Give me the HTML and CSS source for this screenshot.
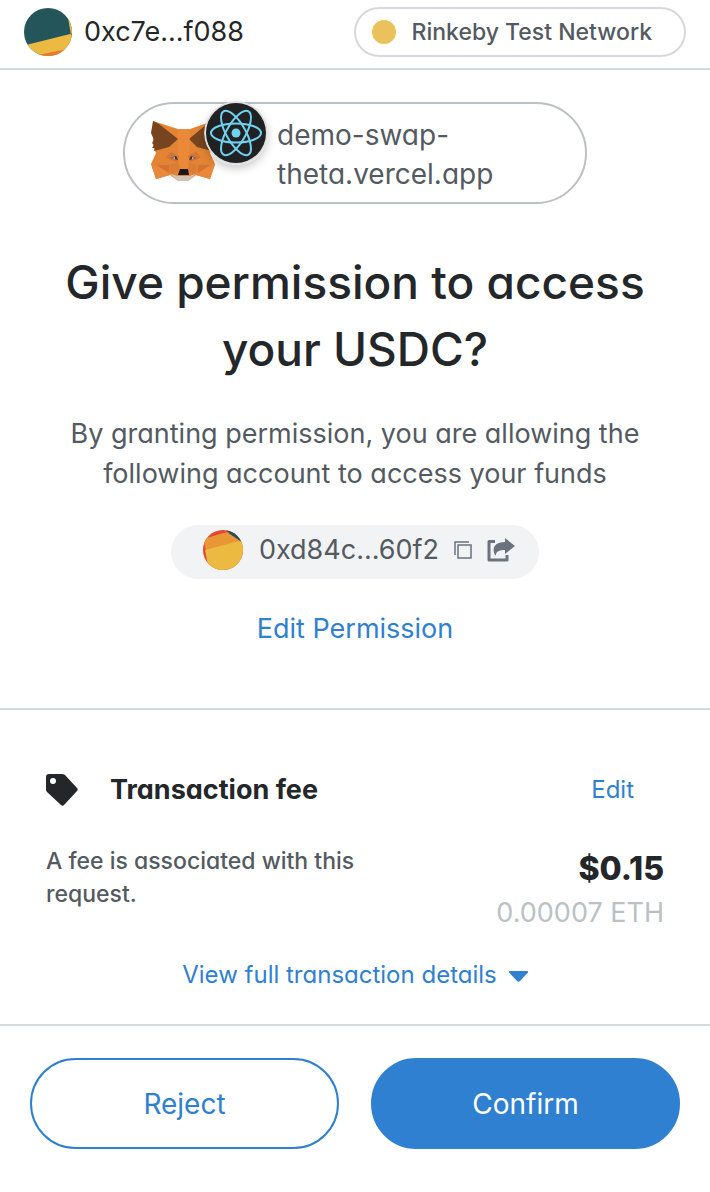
FILE: index.html
```html
<!DOCTYPE html>
<html lang="en">
<head>
<meta charset="utf-8">
<meta name="viewport" content="width=device-width, initial-scale=1">
<title>Give permission</title>
<link rel="stylesheet" href="styles.css">
</head>
<body>
<header class="topbar">
  <div class="account">
    <svg class="avatar" viewBox="0 0 48 48" aria-hidden="true">
      <clipPath id="a"><circle cx="24" cy="24" r="24"/></clipPath>
      <g clip-path="url(#a)"><path fill="#24555a" d="M0 0h48v48H0z"/><path fill="#ecb941" d="M0 37.500 48 25.500V48H0zM44 10l3 17h2V7z"/><path fill="#e7772d" d="M14 47 44 41v7H14z"/></g>
    </svg>
    <span>0xc7e...f088</span>
  </div>
  <div class="network"><span class="network-dot"></span>Rinkeby Test Network</div>
</header>
<main>
  <section class="permission">
    <div class="origin">
      <div class="origin-icons">
        <svg class="fox" viewBox="0 0 64 62" aria-hidden="true">
          <path fill="#e38434" d="M2 0 27 8H39L62 0V27L59 32 64 43 59 58 45 54 37 60H27L19 54 5 58 0 43 5 32 2 26z"/>
          <path fill="#76451f" d="M2 0 8 3 27 18 18 26 3 30 4 27 1 27 3 24 1 22 3 19 0 12zM62 0 56 3 38 18 46 26 61 30 60 27 63 27 61 24 63 22 61 19 64 12z"/>
          <path fill="#ea8a38" d="M27 8H39L38 34 37 50H29L27 34z"/>
          <path fill="#d5722f" d="M5 44H18V52zM60 44H47V52z"/>
          <path fill="#e9873a" d="M0 43 5 44 18 52 19 54 5 58zM64 43 60 44 47 52 45 54 59 58z"/>
          <path fill="#d27337" d="M15 36 20 31 28 35 26 41 18 38zM50 36 45 31 37 35 39 41 47 38z"/>
          <path fill="#dc7d33" d="M18 44 27 41 29 50 20 53zM46 44 38 41 37 50 44 53z"/>
          <path fill="#33363c" d="M20 37 25 35 27 39zM45 37 40 35 38 39z"/>
          <path fill="#c7c5ca" d="m21 37 3-1v2zM44 37l-3-1v2z"/>
          <path fill="#d2c3b5" d="m19 53 8 2h11l7-2-8 7H27z"/>
          <path fill="#181a1e" d="M29 48h8l1 6H27z"/>
        </svg>
        <svg class="react" viewBox="0 0 64 64" aria-hidden="true">
          <circle cx="32" cy="32" r="32" fill="#dedfe1"/><circle cx="32" cy="32" r="30" fill="#202122"/>
          <g fill="none" stroke="#70d2f0" stroke-width="2"><ellipse cx="32" cy="32" rx="25" ry="9.500"/><ellipse cx="32" cy="32" rx="25" ry="9.500" transform="rotate(60 32 32)"/><ellipse cx="32" cy="32" rx="25" ry="9.500" transform="rotate(120 32 32)"/></g>
          <circle cx="32" cy="32" r="4.500" fill="#70d2f0"/>
        </svg>
      </div>
      <span class="origin-name">demo-swap-<br>theta.vercel.app</span>
    </div>
    <h1>Give permission to access your USDC?</h1>
    <p class="intro">By granting permission, you are allowing the following account to access your funds</p>
    <div class="contract">
      <svg class="contract-avatar" viewBox="0 0 40 40" aria-hidden="true">
        <clipPath id="b"><circle cx="20" cy="20" r="20"/></clipPath>
        <g clip-path="url(#b)"><path fill="#e4472d" d="M0 0h40v40H0z"/><path fill="#e89636" d="m0 9 24-7 16 10v10L3 20z"/><path fill="#ecb941" d="m2 20 38-10v30H6z"/><path fill="#24505a" d="M23 0h17v13L27 4z"/></g>
      </svg>
      <span class="contract-address">0xd84c...60f2</span>
      <button class="icon-button copy" aria-label="Copy address"><svg viewBox="0 0 18 18"><path fill="none" stroke="#6a737d" stroke-width="1.500" d="M1 14V1h14M4 4h13v13H4z"/></svg></button>
      <button class="icon-button share" aria-label="Open in explorer"><svg viewBox="0 0 28 24"><path fill="none" stroke="#6a737d" stroke-width="3" stroke-linejoin="round" d="M8 3.500H2V22H20V17"/><path fill="#6a737d" d="M18 0v4C9 4 4 9 8 17q1 1 1-1c1-3 4-4 9-4v4l10-8z"/></svg></button>
    </div>
    <button class="link">Edit Permission</button>
  </section>
  <section class="fee">
    <div class="fee-head">
      <svg class="tag" viewBox="0 0 32 32" aria-hidden="true"><path fill="#24272a" fill-rule="evenodd" d="M3 0h13c1 0 2 .4 3 1l12 13c1 1 1 2 0 3L18 31c-1 1-2 1-3 0L1 18c-1-1-1-2-1-3V3c0-2 1-3 3-3m4 4a3 3 0 1 0 0 6 3 3 0 0 0 0-6"/></svg>
      <h2>Transaction fee</h2>
      <button class="link fee-edit">Edit</button>
    </div>
    <div class="fee-body">
      <p class="fee-note">A fee is associated with this request.</p>
      <div class="fee-amount"><strong>$0.15</strong><span>0.00007 ETH</span></div>
    </div>
    <button class="link details">View full transaction details<svg viewBox="0 0 19 11" aria-hidden="true"><path fill="#2f80d1" d="M1 0h17q2 0 .5 2L11 10q-1.500 1.500-3 0L.5 2Q-1 0 1 0"/></svg></button>
  </section>
</main>
<footer class="actions">
  <button class="action reject">Reject</button>
  <button class="action confirm">Confirm</button>
</footer>
</body>
</html>
```
FILE: styles.css
```css
* { box-sizing: border-box; }
body {
  margin: 0;
  background: #fff;
  color: #24272a;
  font: 27px/40px Inter, "Liberation Sans", sans-serif;
  font-feature-settings: "cv11";
}
h1, h2, p { margin: 0; }
button {
  padding: 0;
  border: 0;
  background: none;
  color: inherit;
  font: inherit;
  font-feature-settings: inherit;
  cursor: pointer;
}
svg { display: block; flex: none; }
.topbar {
  display: flex;
  align-items: center;
  justify-content: space-between;
  padding: 7px 24px 11px;
  border-bottom: 2px solid #d6d9dc;
}
.account { display: flex; align-items: center; gap: 12px; }
.avatar { width: 48px; height: 48px; }
.network {
  display: flex;
  align-items: center;
  gap: 16px;
  height: 50px;
  padding: 0 32px 0 16px;
  border: 2px solid #d6d9dc;
  border-radius: 25px;
  color: #535a61;
  font-size: 23px;
  font-weight: 500;
}
.network-dot { width: 24px; height: 24px; border-radius: 50%; background: #ecc15c; }
.permission {
  display: flex;
  flex-direction: column;
  align-items: center;
  padding: 32px 30px 60px;
  border-bottom: 2px solid #d6d9dc;
  text-align: center;
}
.origin {
  display: flex;
  gap: 9px;
  width: 464px;
  max-width: 100%;
  padding: 12px 26px 8px;
  border: 2px solid #bbc0c5;
  border-radius: 52px;
  color: #535a61;
  font-size: 28px;
  line-height: 39px;
  text-align: left;
}
.origin-icons { position: relative; width: 117px; }
.fox { width: 64px; height: 62px; margin-top: 5px; }
.react {
  position: absolute;
  top: -15px;
  right: 0;
  width: 64px;
  height: 64px;
  border-radius: 50%;
  box-shadow: 0 4px 8px #0003;
}
h1 { margin-top: 45px; font-size: 46px; line-height: 67px; font-weight: 500; }
.intro { margin-top: 31px; color: #535a61; }
.contract {
  display: flex;
  align-items: center;
  height: 54px;
  margin: 31px 0 30px;
  padding: 0 24px 4px 32px;
  border-radius: 27px;
  background: #f2f3f5;
  color: #535a61;
}
.contract-avatar { width: 40px; height: 40px; margin-right: 16px; }
.copy { margin-left: 15px; }
.copy svg { width: 18px; height: 18px; }
.share { margin-left: 15px; }
.share svg { width: 28px; height: 24px; }
.link { color: #2f80d1; }
.permission { padding-bottom: 59px; }
.fee { padding: 60px 46px 31px; border-bottom: 2px solid #d6d9dc; }
.fee-head { display: flex; align-items: center; }
.tag { width: 32px; height: 32px; }
h2 { margin-left: 32px; font-size: 27px; font-weight: 700; line-height: 40px; }
.fee-edit { margin: 0 30px 0 auto; font-size: 24px; }
.fee-body { display: flex; justify-content: space-between; margin-top: 35px; }
.fee-note { width: 330px; color: #535a61; font-size: 23px; line-height: 33px; font-weight: 500; }
.fee-amount { display: flex; flex-direction: column; text-align: right; }
.fee-amount strong { font-size: 32px; line-height: 48px; font-weight: 800; }
.fee-amount span { color: #bbc0c5; line-height: 40px; }
.details {
  display: flex;
  align-items: center;
  gap: 12px;
  margin: 24px auto 0;
  font-size: 24px;
  line-height: 36px;
}
.details svg { width: 19px; height: 11px; margin-top: 2px; }
.actions { display: flex; gap: 32px; padding: 32px 30px; }
.action { flex: 1; height: 91px; border: 2px solid #2f80d1; border-radius: 46px; font-size: 28px; }
.reject { color: #2f80d1; }
.confirm { background: #2f80d1; color: #fff; }
```
